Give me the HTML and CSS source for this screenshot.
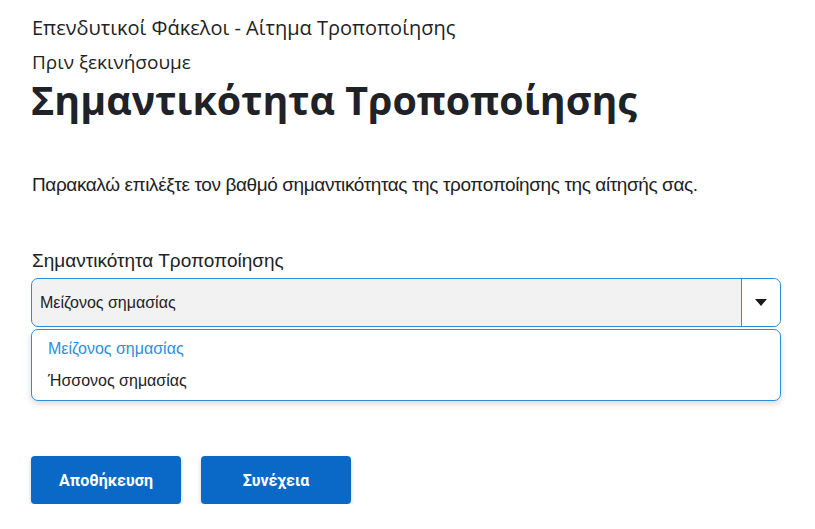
FILE: index.html
```html
<!DOCTYPE html>
<html lang="el">
<head>
    <meta charset="UTF-8">
    <meta name="viewport" content="width=device-width, initial-scale=1.0">
    <title>Σημαντικότητα Τροποποίησης</title>
    <link rel="stylesheet" href="styles.css">
</head>
<body>
    <div class="page">
        <div class="caption">Επενδυτικοί Φάκελοι - Αίτημα Τροποποίησης</div>
        <div class="subcaption">Πριν ξεκινήσουμε</div>
        <h1 class="title">Σημαντικότητα Τροποποίησης</h1>
        <p class="intro">Παρακαλώ επιλέξτε τον βαθμό σημαντικότητας της τροποποίησης της αίτησής σας.</p>

        <div class="field">
            <label class="field-label">Σημαντικότητα Τροποποίησης</label>
            <div class="select">
                <span class="select-value">Μείζονος σημασίας</span>
                <span class="select-toggle">
                    <svg width="12" height="7" viewBox="0 0 12 7"><path d="M0 0h12L6 7z" fill="#1a1a1a"/></svg>
                </span>
            </div>
            <ul class="options">
                <li class="option active">Μείζονος σημασίας</li>
                <li class="option">Ήσσονος σημασίας</li>
            </ul>
        </div>

        <div class="actions">
            <button class="btn">Αποθήκευση</button>
            <button class="btn">Συνέχεια</button>
        </div>
    </div>
</body>
</html>
```

FILE: styles.css
```css
body {
    margin: 0;
    background: #fff;
    color: #222;
    font-family: 'Open Sans', sans-serif;
}
.page {
    padding: 14px 34px 0 31px;
}
.caption {
    font-size: 20px;
    line-height: 28px;
    margin-left: 1px;
}
.subcaption {
    font-size: 19px;
    line-height: 28px;
    margin-top: 6px;
    margin-left: 1px;
}
.title {
    margin: 0;
    font-size: 39.4px;
    line-height: 48px;
    font-weight: 700;
    color: #1f2227;
}
.intro {
    margin: 49px 0 0 1px;
    font-family: 'Liberation Sans', Arial, sans-serif;
    font-size: 19px;
    letter-spacing: -0.4px;
    line-height: 24px;
    color: #222;
}
.field {
    margin-top: 52px;
}
.field-label {
    display: block;
    font-family: 'Liberation Sans', Arial, sans-serif;
    font-size: 19px;
    line-height: 24px;
    margin-left: 1px;
    margin-bottom: 5px;
}
.select {
    display: flex;
    height: 47px;
    border: 1px solid #2a8fd6;
    border-radius: 7px;
    background: #f2f2f2;
    font-family: 'Liberation Sans', Arial, sans-serif;
    font-size: 16px;
}
.select-value {
    flex: 1;
    display: flex;
    align-items: center;
    padding-left: 8px;
    border-right: 1px solid #2a8fd6;
}
.select-toggle {
    width: 38px;
    display: flex;
    align-items: center;
    justify-content: center;
    background: #fff;
    border-radius: 0 7px 7px 0;
}
.options {
    list-style: none;
    margin: 2px 0 0 0;
    padding: 3px 0;
    border: 1px solid #2a8fd6;
    border-radius: 7px;
    background: #fff;
    box-shadow: 0 3px 6px rgba(0, 0, 0, 0.15);
    font-family: 'Liberation Sans', Arial, sans-serif;
    font-size: 16px;
}
.option {
    padding: 0 16px;
    line-height: 32px;
}
.option.active {
    color: #2b8fe0;
}
.actions {
    display: flex;
    gap: 20px;
    margin-top: 55px;
}
.btn {
    width: 150px;
    height: 48px;
    border: none;
    border-radius: 4px;
    background: #0a69c7;
    color: #fff;
    font-family: Roboto, sans-serif;
    font-size: 16px;
    font-weight: 700;
    box-shadow: 0 2px 4px rgba(0, 0, 0, 0.2);
    cursor: pointer;
}
```
